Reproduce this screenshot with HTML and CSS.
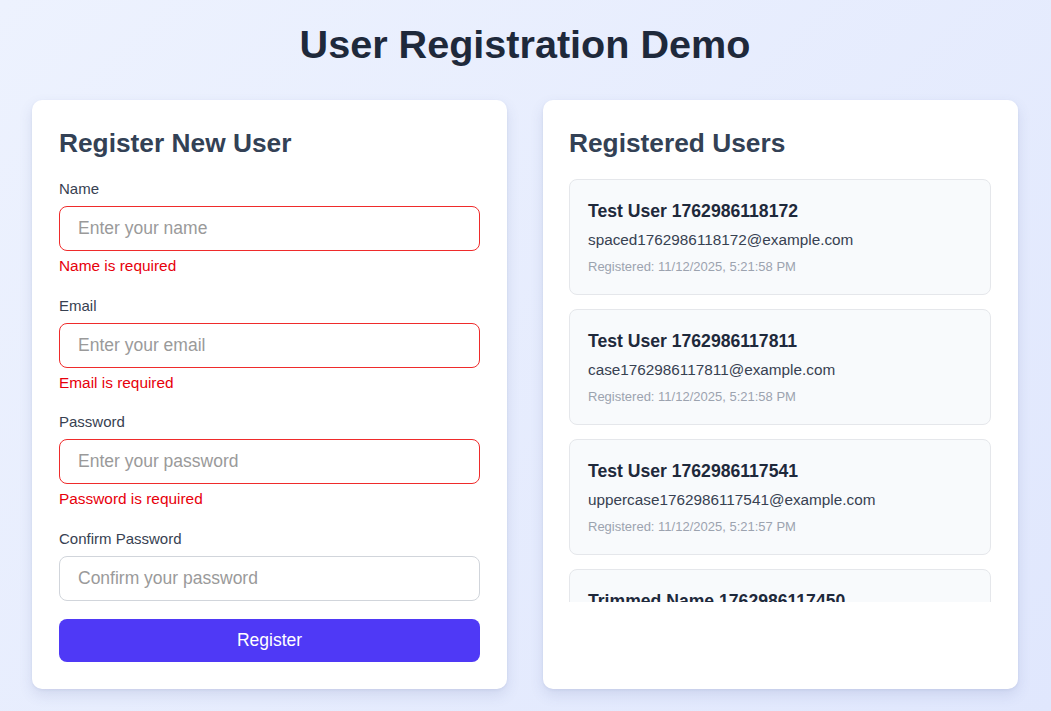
FILE: index.html
```html
<!DOCTYPE html>
<html lang="en">
<head>
<meta charset="utf-8">
<title>User Registration Demo</title>
<link rel="stylesheet" href="styles.css">
</head>
<body>
<div class="page">
  <h1 class="title">User Registration Demo</h1>
  <div class="columns">
    <section class="card">
      <h2 class="card-title">Register New User</h2>
      <form class="form">
        <div class="group">
          <label class="label">Name</label>
          <input class="input invalid" type="text" placeholder="Enter your name">
          <div class="error">Name is required</div>
        </div>
        <div class="group">
          <label class="label">Email</label>
          <input class="input invalid" type="email" placeholder="Enter your email">
          <div class="error">Email is required</div>
        </div>
        <div class="group">
          <label class="label">Password</label>
          <input class="input invalid" type="password" placeholder="Enter your password">
          <div class="error">Password is required</div>
        </div>
        <div class="group">
          <label class="label">Confirm Password</label>
          <input class="input" type="password" placeholder="Confirm your password">
        </div>
        <button class="button" type="button">Register</button>
      </form>
    </section>
    <section class="card card-right">
      <h2 class="card-title">Registered Users</h2>
      <div class="list">
        <div class="user">
          <div class="user-name">Test User 1762986118172</div>
          <div class="user-email">spaced1762986118172@example.com</div>
          <div class="user-date">Registered: 11/12/2025, 5:21:58 PM</div>
        </div>
        <div class="user">
          <div class="user-name">Test User 1762986117811</div>
          <div class="user-email">case1762986117811@example.com</div>
          <div class="user-date">Registered: 11/12/2025, 5:21:58 PM</div>
        </div>
        <div class="user">
          <div class="user-name">Test User 1762986117541</div>
          <div class="user-email">uppercase1762986117541@example.com</div>
          <div class="user-date">Registered: 11/12/2025, 5:21:57 PM</div>
        </div>
        <div class="user">
          <div class="user-name">Trimmed Name 1762986117450</div>
          <div class="user-email">trimmed1762986117450@example.com</div>
          <div class="user-date">Registered: 11/12/2025, 5:21:57 PM</div>
        </div>
      </div>
    </section>
  </div>
</div>
</body>
</html>
```
FILE: styles.css
```css
* { box-sizing: border-box; }
html, body { margin: 0; height: 100%; }
body {
  font-family: "Liberation Sans", Arial, Helvetica, sans-serif;
  background: linear-gradient(135deg, #edf2fe 0%, #e0e7fd 100%);
  color: #374151;
  overflow: hidden;
}
.page { padding: 20px 33px 0 32px; }
.title {
  margin: 0 0 32px;
  text-align: center;
  font-size: 39.6px;
  line-height: 48px;
  font-weight: 700;
  color: #1e293b;
}
.columns {
  display: grid;
  grid-template-columns: 1fr 1fr;
  gap: 36px;
}
.card {
  background: #fff;
  border-radius: 10px;
  padding: 27px 27px 27px;
  box-shadow: 0 6px 14px rgba(60, 80, 140, 0.13), 0 1px 3px rgba(60, 80, 140, 0.08);
}
.card-right { padding-left: 26px; }
.card-title {
  margin: 0 0 20px;
  font-size: 26.3px;
  line-height: 32px;
  font-weight: 700;
  color: #334155;
}
.form { margin: 0; }
.group { margin-bottom: 18px; }
.label {
  display: block;
  font-size: 15px;
  line-height: 20px;
  margin-bottom: 7px;
  color: #374151;
}
.input {
  display: block;
  width: 100%;
  height: 45px;
  padding: 0 18px;
  font-family: inherit;
  font-size: 17.5px;
  border: 1px solid #d1d5db;
  border-radius: 8px;
  background: #fff;
  color: #111827;
  outline: none;
}
.input::placeholder { color: #9a9a9a; }
.input.invalid { border-color: #ef2b2b; }
.error {
  margin-top: 6px;
  padding-bottom: 2.5px;
  font-size: 15.4px;
  line-height: 18px;
  color: #e7000b;
}
.button {
  display: block;
  width: 100%;
  height: 43px;
  border: none;
  border-radius: 8px;
  background: #4f39f6;
  color: #fff;
  font-family: inherit;
  font-size: 17.5px;
}
.list {
  height: 423px;
  overflow: hidden;
}
.user {
  background: #f8fafc;
  border: 1px solid #e5e7eb;
  border-radius: 8px;
  padding: 18px 18px;
  margin-bottom: 14px;
}
.user-name {
  font-size: 17.6px;
  line-height: 26px;
  font-weight: 700;
  color: #1e293b;
}
.user-email {
  margin-top: 4px;
  font-size: 15.3px;
  line-height: 24px;
  color: #374151;
}
.user-date {
  margin-top: 6px;
  font-size: 13px;
  line-height: 18px;
  color: #9ca3af;
}
```
